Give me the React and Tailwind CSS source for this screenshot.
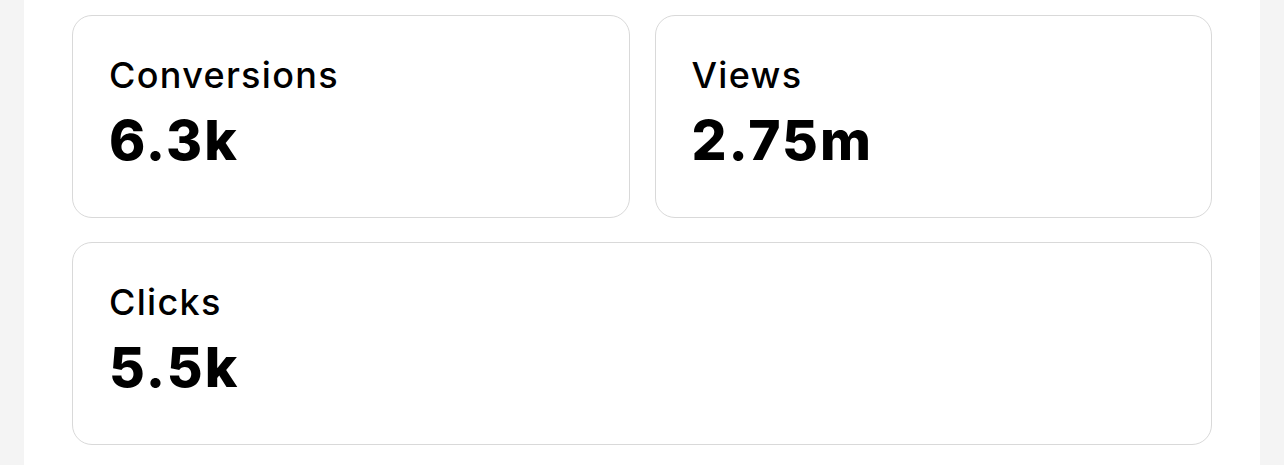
import React from "react";

const stats = [
  { label: "Conversions", value: "6.3k", span: "" },
  { label: "Views", value: "2.75m", span: "" },
  { label: "Clicks", value: "5.5k", span: "col-span-2" },
];

const StatCard = ({ label, value, span }) => (
  <div className={`h-[203px] rounded-[20px] border border-[#d9d9d9] bg-white px-[36px] pt-[36px] ${span}`}>
    <div className="text-[36px] leading-[46px] font-medium tracking-[1.3px] text-black">{label}</div>
    <div className="mt-[12px] text-[55px] leading-[60px] font-extrabold tracking-[2px] text-black">{value}</div>
  </div>
);

export default function App() {
  return (
    <div className="h-[465px] w-full bg-[#f4f4f4] px-[24px]" style={{ fontFamily: "Inter, 'Noto Sans', sans-serif" }}>
      <div className="h-full bg-white px-[48px] pt-[15px]">
        <div className="grid grid-cols-2 gap-x-[25px] gap-y-[24px]">
          {stats.map((s) => (
            <StatCard key={s.label} {...s} />
          ))}
        </div>
      </div>
    </div>
  );
}
